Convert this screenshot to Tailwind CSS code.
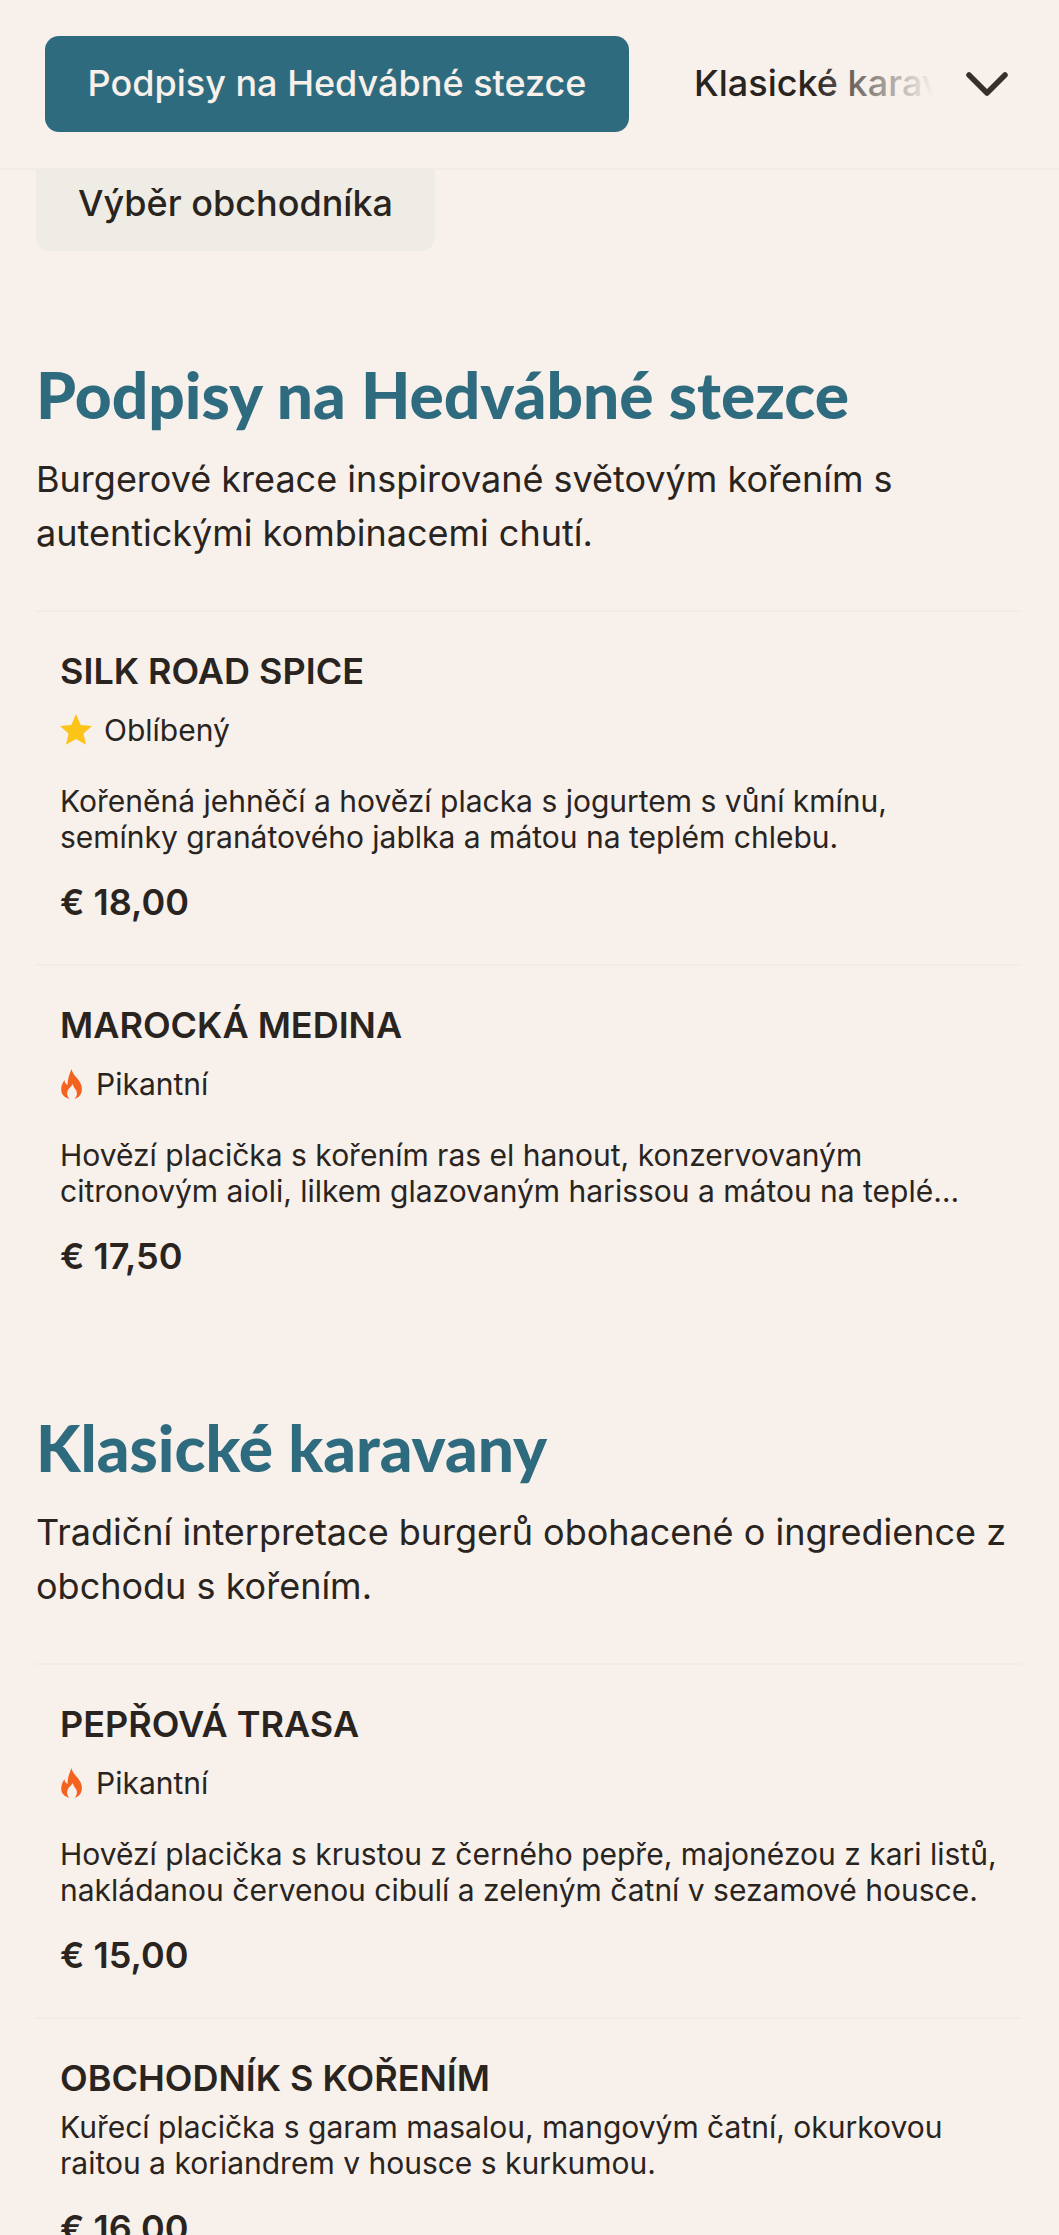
<!DOCTYPE html>
<html lang="cs">
<head>
  <meta charset="UTF-8" />
  <meta name="viewport" content="width=device-width, initial-scale=1.0"/>
  <title>Menu</title>
  <script src="https://cdn.jsdelivr.net/npm/@tailwindcss/browser@4"></script>
</head>
<body class="bg-[#f7f0eb] text-[#2a2420] font-['Inter',sans-serif] h-[2235px] overflow-hidden">
  <!-- Kategorie -->
  <header class="h-[170px] border-b-2 border-[#f1ece6] flex items-center pl-[45px]">
    <a class="w-[584px] h-[96px] shrink-0 rounded-[14px] bg-[#2f6b7e] text-[#f7f0eb] text-[36px] font-medium flex items-center justify-center pb-[2px]">Podpisy na Hedvábné stezce</a>
    <div class="relative ml-[65px] w-[240px] mb-[2px] overflow-hidden whitespace-nowrap text-[36px] font-medium">
      Klasické karavany
      <div class="absolute inset-y-0 right-0 w-[120px] bg-gradient-to-r from-[#f7f0eb]/0 to-[#f7f0eb]"></div>
    </div>
    <svg class="ml-[32px] w-[42px] h-[26px]" viewBox="0 0 42 26" fill="none" stroke="#37312c" stroke-width="5.500" stroke-linecap="round" stroke-linejoin="round"><path d="M3 4l18 18L39 4"/></svg>
  </header>

  <main class="pl-[36px] pr-[36px]">
    <div class="w-[399px] h-[81px] rounded-b-[14px] bg-[#efece6] text-[36px] font-medium flex items-center justify-center pb-[16px]">Výběr obchodníka</div>

    <section class="mt-[108px]">
      <h2 class="font-['Lato',sans-serif] text-[64px] font-black leading-[72px] text-[#2f6b7e]">Podpisy na Hedvábné stezce</h2>
      <p class="mt-[21px] text-[36px] leading-[54px]">Burgerové kreace inspirované světovým kořením s autentickými kombinacemi chutí.</p>
      <div class="mt-[50px] mr-[2px]">
        <article class="border-t-2 border-[#f1ece6] px-[24px] h-[354px] pt-[37px]">
          <h3 class="text-[36px] font-semibold leading-[44px]">SILK ROAD SPICE</h3>
          <div class="mt-[16px] h-[40px] pt-[2px] flex items-center gap-[12px] text-[30px]">
            <svg class="w-[32px] h-[32px]" viewBox="0 0 24 24" fill="#fcc419"><path d="M12 0l3.500 8.200 8.500.8-6.400 5.700 1.900 8.400L12 18.700 4.500 23.100l1.900-8.400L0 9l8.500-.8z"/></svg>
            Oblíbený
          </div>
          <p class="mt-[34px] text-[30px] leading-[36px]">Kořeněná jehněčí a hovězí placka s jogurtem s vůní kmínu, semínky granátového jablka a mátou na teplém chlebu.</p>
          <p class="mt-[25px] text-[36px] font-semibold leading-[44px]">€ 18,00</p>
        </article>
        <article class="border-t-2 border-[#f1ece6] px-[24px] h-[354px] pt-[37px]">
          <h3 class="text-[36px] font-semibold leading-[44px]">MAROCKÁ MEDINA</h3>
          <div class="mt-[16px] h-[40px] pt-[2px] flex items-center gap-[13px] text-[30px]">
            <svg class="w-[23px] h-[30px]" viewBox="0 0 22 30" fill="#f4621f"><path d="M11 0c1 5 4 7 7 11 3 4 4 8 3 12-1 4-4 6-7 7 2-2 3-5 2-8-1-2-3-4-4-7-1 3-4 4-5 7-1 3 0 6 2 8-3-1-7-3-8-7-1-5 1-9 3-12 0 2 1 4 3 5C7 10 9 5 11 0z"/></svg>
            Pikantní
          </div>
          <p class="mt-[34px] text-[30px] leading-[36px]">Hovězí placička s kořením ras el hanout, konzervovaným citronovým aioli, lilkem glazovaným harissou a mátou na teplé…</p>
          <p class="mt-[25px] text-[36px] font-semibold leading-[44px]">€ 17,50</p>
        </article>
      </div>
    </section>

    <section class="mt-[94px]">
      <h2 class="font-['Lato',sans-serif] text-[64px] font-black leading-[72px] text-[#2f6b7e]">Klasické karavany</h2>
      <p class="mt-[21px] text-[36px] leading-[54px]">Tradiční interpretace burgerů obohacené o ingredience z obchodu s kořením.</p>
      <div class="mt-[50px] mr-[2px]">
        <article class="border-t-2 border-[#f1ece6] px-[24px] h-[354px] pt-[37px]">
          <h3 class="text-[36px] font-semibold leading-[44px]">PEPŘOVÁ TRASA</h3>
          <div class="mt-[16px] h-[40px] pt-[2px] flex items-center gap-[13px] text-[30px]">
            <svg class="w-[23px] h-[30px]" viewBox="0 0 22 30" fill="#f4621f"><path d="M11 0c1 5 4 7 7 11 3 4 4 8 3 12-1 4-4 6-7 7 2-2 3-5 2-8-1-2-3-4-4-7-1 3-4 4-5 7-1 3 0 6 2 8-3-1-7-3-8-7-1-5 1-9 3-12 0 2 1 4 3 5C7 10 9 5 11 0z"/></svg>
            Pikantní
          </div>
          <p class="mt-[34px] text-[30px] leading-[36px]">Hovězí placička s krustou z černého pepře, majonézou z kari listů, nakládanou červenou cibulí a zeleným čatní v sezamové housce.</p>
          <p class="mt-[25px] text-[36px] font-semibold leading-[44px]">€ 15,00</p>
        </article>
        <article class="border-t-2 border-[#f1ece6] px-[24px] pt-[37px]">
          <h3 class="text-[36px] font-semibold leading-[44px]">OBCHODNÍK S KOŘENÍM</h3>
          <p class="mt-[9px] text-[30px] leading-[36px]">Kuřecí placička s garam masalou, mangovým čatní, okurkovou raitou a koriandrem v housce s kurkumou.</p>
          <p class="mt-[25px] text-[36px] font-semibold leading-[44px]">€ 16,00</p>
        </article>
      </div>
    </section>
  </main>
</body>
</html>
